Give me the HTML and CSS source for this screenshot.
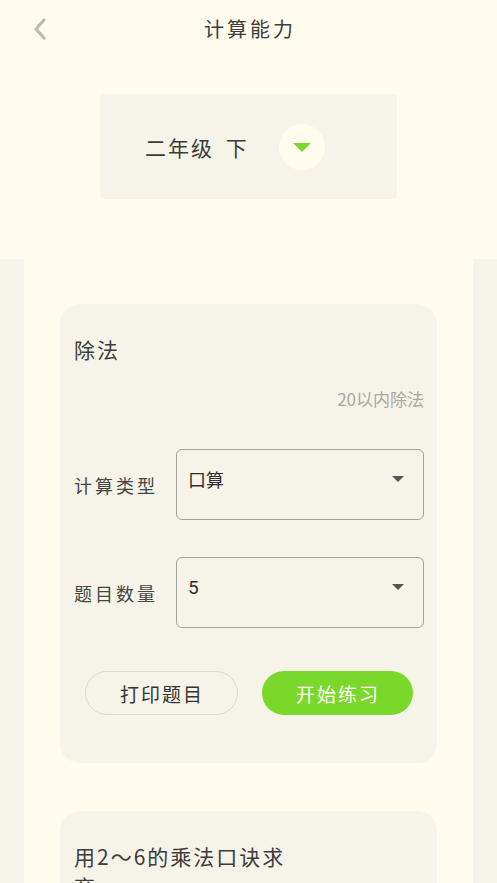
FILE: index.html
```html
<!DOCTYPE html>
<html lang="zh-CN">
<head>
<meta charset="utf-8">
<title>计算能力</title>
<link rel="stylesheet" href="styles.css">
</head>
<body>
<div class="top">
  <header class="header">
    <span class="back">
      <svg width="16" height="24" viewBox="0 0 16 24"><path d="M12 3 L4 12 L12 21" fill="none" stroke="#bdbcb4" stroke-width="3.2" stroke-linecap="round" stroke-linejoin="round"/></svg>
    </span>
    <h1 class="title">计算能力</h1>
  </header>
  <div class="grade">
    <span class="grade-text">二年级 下</span>
    <span class="grade-btn"><span class="tri"></span></span>
  </div>
</div>
<main class="main">
  <div class="inner">
    <section class="card">
      <h2 class="card-title">除法</h2>
      <p class="card-sub">20以内除法</p>
      <div class="row">
        <span class="label">计算类型</span>
        <div class="select"><span>口算</span><span class="caret"></span></div>
      </div>
      <div class="row">
        <span class="label">题目数量</span>
        <div class="select"><span class="num">5</span><span class="caret"></span></div>
      </div>
      <div class="actions">
        <button class="btn btn-outline">打印题目</button>
        <button class="btn btn-green">开始练习</button>
      </div>
    </section>
    <section class="card card-next">
      <h2 class="card-title narrow">用2～6的乘法口诀求商</h2>
    </section>
  </div>
</main>
</body>
</html>
```

FILE: styles.css
```css
html, body {
  margin: 0;
  padding: 0;
  overflow: hidden;
}
body {
  background: #fffcee;
  font-family: "Noto Sans CJK SC", "Noto Sans", sans-serif;
  color: #3a3a3a;
}
.top {
  height: 259px;
  background: #fffcee;
}
.header {
  height: 58px;
  position: relative;
  display: flex;
  align-items: center;
  justify-content: center;
}
.back {
  position: absolute;
  left: 32px;
  top: 17px;
  width: 16px;
  height: 24px;
}
.back svg { display: block; }
.title {
  margin: 0;
  font-size: 20px;
  font-weight: 400;
  letter-spacing: 3px;
  padding-left: 3px;
  line-height: 58px;
  color: #3c3c3c;
}
.grade {
  margin: 36px 100px 0;
  height: 105px;
  background: #f6f4e8;
  border-radius: 4px;
  display: flex;
  align-items: center;
  padding-left: 45px;
}
.grade-text {
  font-size: 21px;
  letter-spacing: 2px;
  word-spacing: 5px;
  color: #3c3c3c;
  line-height: 30px;
}
.grade-btn {
  margin-left: 30px;
  width: 46px;
  height: 46px;
  border-radius: 50%;
  background: #fffcee;
  display: flex;
  align-items: center;
  justify-content: center;
}
.tri {
  width: 0;
  height: 0;
  border-left: 9px solid transparent;
  border-right: 9px solid transparent;
  border-top: 9px solid #7ad82a;
  margin-top: 2px;
}
.main {
  background: #f6f4e8;
  padding: 0 24px;
}
.inner {
  background: #fffcee;
  padding: 45px 36px 60px;
  display: flex;
  flex-direction: column;
  gap: 48px;
}
.card {
  background: #f6f4e8;
  border-radius: 20px;
  padding: 30px 13px 48px 14px;
}
.card-next {
  min-height: 300px;
}
.card-title {
  margin: 0;
  font-size: 21px;
  font-weight: 400;
  letter-spacing: 2px;
  line-height: 30px;
  color: #3c3c3c;
}
.card-title.narrow {
  max-width: 226px;
}
.card-sub {
  margin: 23px 0 0;
  text-align: right;
  font-size: 17px;
  line-height: 24px;
  color: #a9a8a2;
}
.row {
  display: flex;
  align-items: center;
  margin-top: 38px;
}
.row + .row {
  margin-top: 37px;
}
.label {
  width: 102px;
  flex: none;
  font-size: 18px;
  letter-spacing: 3px;
  color: #444;
}
.select {
  flex: 1;
  height: 71px;
  box-sizing: border-box;
  border: 1px solid #a3a29c;
  border-radius: 6px;
  padding: 16px 19px 0 11px;
  display: flex;
  justify-content: space-between;
  align-items: flex-start;
  font-size: 18px;
  line-height: 27px;
  color: #2e2e2e;
}
.num {
  font-family: Roboto, "Noto Sans", sans-serif;
  font-size: 19px;
}
.caret {
  margin-top: 10px;
  width: 0;
  height: 0;
  border-left: 6px solid transparent;
  border-right: 6px solid transparent;
  border-top: 6px solid #555;
}
.actions {
  margin-top: 43px;
  display: flex;
  justify-content: center;
  gap: 24px;
  padding-right: 1px;
}
.btn {
  width: 153px;
  height: 44px;
  border-radius: 22px;
  font-family: "Noto Sans CJK SC", sans-serif;
  font-size: 19px;
  letter-spacing: 2px;
  padding: 0 0 0 2px;
  cursor: pointer;
}
.btn-outline {
  background: transparent;
  border: 1.5px solid #dcdad0;
  color: #333;
}
.btn-green {
  background: #7ad82a;
  border: none;
  color: #fff;
  width: 151px;
}
```
